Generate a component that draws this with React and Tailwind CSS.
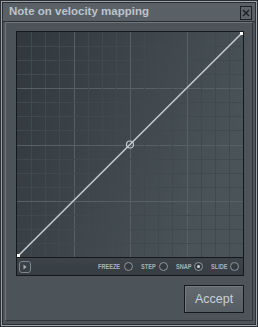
import React from "react";

const W = 226;
const H = 225;

// grid lines for the mapping chart
function Grid() {
  const lines = [];
  for (let i = 1; i < 16; i++) {
    const major = i % 4 === 0;
    const x = Math.round((W / 16) * i) + 0.5;
    const y = Math.round((H / 16) * i) + 0.5;
    const c = major ? "#566066" : "#40494f";
    lines.push(<line key={"v" + i} x1={x} y1={0} x2={x} y2={H} stroke={c} strokeWidth="1" />);
    lines.push(<line key={"h" + i} x1={0} y1={y} x2={W} y2={y} stroke={c} strokeWidth="1" />);
  }
  return lines;
}

function Radio({ label, w, on }) {
  return (
    <div className="flex items-center gap-[3px]">
      <span className={"flex items-center h-[9px] whitespace-nowrap leading-none " + w}>
        <span className="block origin-left scale-x-[0.7] text-[8px] font-bold text-[#a9b1b7] leading-none">
          {label}
        </span>
      </span>
      <span className="w-[9px] h-[9px] rounded-full border border-[#8d969c] bg-[#343b40] flex items-center justify-center">
        {on && <span className="w-[3px] h-[3px] rounded-full bg-[#d0d8dd]" />}
      </span>
    </div>
  );
}

export default function App() {
  return (
    <div
      className="w-[258px] h-[327px] bg-[#2a2f33] p-px"
      style={{ fontFamily: '"Liberation Sans", Arial, sans-serif' }}
    >
      <div className="h-full bg-[#9ba3a9] p-px">
        <div className="h-full bg-[#2a2f33] p-px">
          <div className="h-full bg-[#4c545a] flex flex-col">
            {/* title bar */}
            <div className="h-[19px] bg-[#596167] border-b border-[#2a2f33] flex items-center pl-[6px] pr-[3px]">
              <span className="text-[11.5px] font-bold text-[#bcc4ca] leading-none">
                Note on velocity mapping
              </span>
              <div className="ml-auto w-[12px] h-[14px] mt-[1px] border border-[#1c2023] bg-[#5e666c] flex items-center justify-center">
                <svg width="8" height="8" viewBox="0 0 8 8">
                  <path d="M1 1L7 7M7 1L1 7" stroke="#1c2023" strokeWidth="1.4" />
                </svg>
              </div>
            </div>

            {/* body */}
            <div className="flex-1 mx-[2px] mb-[3px] border border-t-[#6f777d] border-l-[#6f777d] border-r-[#30363a] border-b-[#30363a] pl-[10px] pr-[8px] pt-[8px] flex flex-col">
              <div className="w-[228px] border border-[#15191b] bg-[#15191b] flex flex-col gap-px">
                <svg width={W} height={H} className="block">
                  <defs>
                    <linearGradient id="bg" x1="0" y1="0" x2="1" y2="0.4">
                      <stop offset="0" stopColor="#30383d" />
                      <stop offset="1" stopColor="#4a5358" />
                    </linearGradient>
                  </defs>
                  <rect width={W} height={H} fill="url(#bg)" />
                  <Grid />
                  <line x1="1.5" y1={H - 1.5} x2={W - 1.5} y2="1.5" stroke="#c5cdd2" strokeWidth="1.5" />
                  <circle cx={W / 2} cy={H / 2} r="3.5" fill="none" stroke="#c5cdd2" strokeWidth="1.2" />
                  <rect x="0" y={H - 3} width="3" height="3" fill="#ffffff" />
                  <rect x={W - 3} y="0" width="3" height="3" fill="#ffffff" />
                </svg>
                <div className="h-[17px] bg-gradient-to-b from-[#3c444a] to-[#363d42] flex items-center pl-[2px] pr-[4px]">
                  <div className="w-[12px] h-[12px] rounded-[3px] border border-[#7b848a] flex items-center justify-center">
                    <svg width="4" height="6" viewBox="0 0 4 6">
                      <path d="M0.5 0.5L3.5 3L0.5 5.5Z" fill="#a9b1b7" />
                    </svg>
                  </div>
                  <div className="ml-auto flex items-center gap-[8px]">
                    <Radio label="FREEZE" w="w-[23px]" />
                    <Radio label="STEP" w="w-[15px]" />
                    <Radio label="SNAP" w="w-[15px]" on />
                    <Radio label="SLIDE" w="w-[16px]" />
                  </div>
                </div>
              </div>

              <div className="mt-[9px] w-[228px] flex justify-end">
                <button className="w-[60px] h-[28px] border border-[#15191b] bg-gradient-to-b from-[#626a70] to-[#565e64] shadow-[inset_1px_1px_0_#737b81] text-[12.5px] text-[#c9d1d6] flex items-center justify-center">
                  Accept
                </button>
              </div>
            </div>
          </div>
        </div>
      </div>
    </div>
  );
}
